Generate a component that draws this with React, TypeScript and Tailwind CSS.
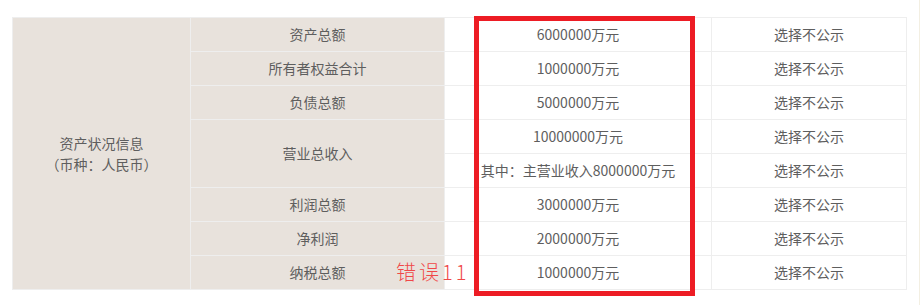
import React from 'react';

const font = { fontFamily: '"Noto Sans CJK SC", "Liberation Sans", sans-serif' };

interface Row {
  label?: string;
  value: string;
  span?: number;
  skipLabel?: boolean;
}

const rows: Row[] = [
  { label: '资产总额', value: '6000000万元' },
  { label: '所有者权益合计', value: '1000000万元' },
  { label: '负债总额', value: '5000000万元' },
  { label: '营业总收入', value: '10000000万元', span: 2 },
  { value: '其中：主营业收入8000000万元', skipLabel: true },
  { label: '利润总额', value: '3000000万元' },
  { label: '净利润', value: '2000000万元' },
  { label: '纳税总额', value: '1000000万元' },
];

export default function App() {
  return (
    <div
      className="relative w-[920px] h-[305px] bg-white pt-[17px] pl-[12px] border-r border-[#f3efe2] text-[14px] text-[#5e5e5e]"
      style={font}
    >
      <table className="table-fixed border-collapse w-[894px]">
        <colgroup>
          <col className="w-[178px]" />
          <col className="w-[254px]" />
          <col className="w-[267px]" />
          <col className="w-[195px]" />
        </colgroup>
        <tbody>
          {rows.map((row, i) => (
            <tr key={i} className="h-[34px]">
              {i === 0 && (
                <td
                  rowSpan={rows.length}
                  className="bg-[#e8e2dc] border border-[#eeeeee] text-center align-middle leading-[21px]"
                >
                  资产状况信息
                  <br />
                  （币种：人民币）
                </td>
              )}
              {!row.skipLabel && (
                <td
                  rowSpan={row.span ?? 1}
                  className="bg-[#e8e2dc] border border-[#eeeeee] text-center align-middle p-0"
                >
                  {row.label}
                </td>
              )}
              <td className="border border-[#eeeeee] text-center align-middle p-0 whitespace-nowrap">
                {row.value}
              </td>
              <td className="border border-[#eeeeee] text-center align-middle p-0">选择不公示</td>
            </tr>
          ))}
        </tbody>
      </table>

      {/* 标注框 */}
      <div className="absolute left-[474px] top-[16px] w-[221px] h-[280px] border-[5px] border-[#ed1c24] pointer-events-none" />
      <div className="absolute left-[396px] top-[258px] text-[20px] leading-[28px] font-light tracking-[3px] text-[#f04848]">
        错误11
      </div>
    </div>
  );
}
